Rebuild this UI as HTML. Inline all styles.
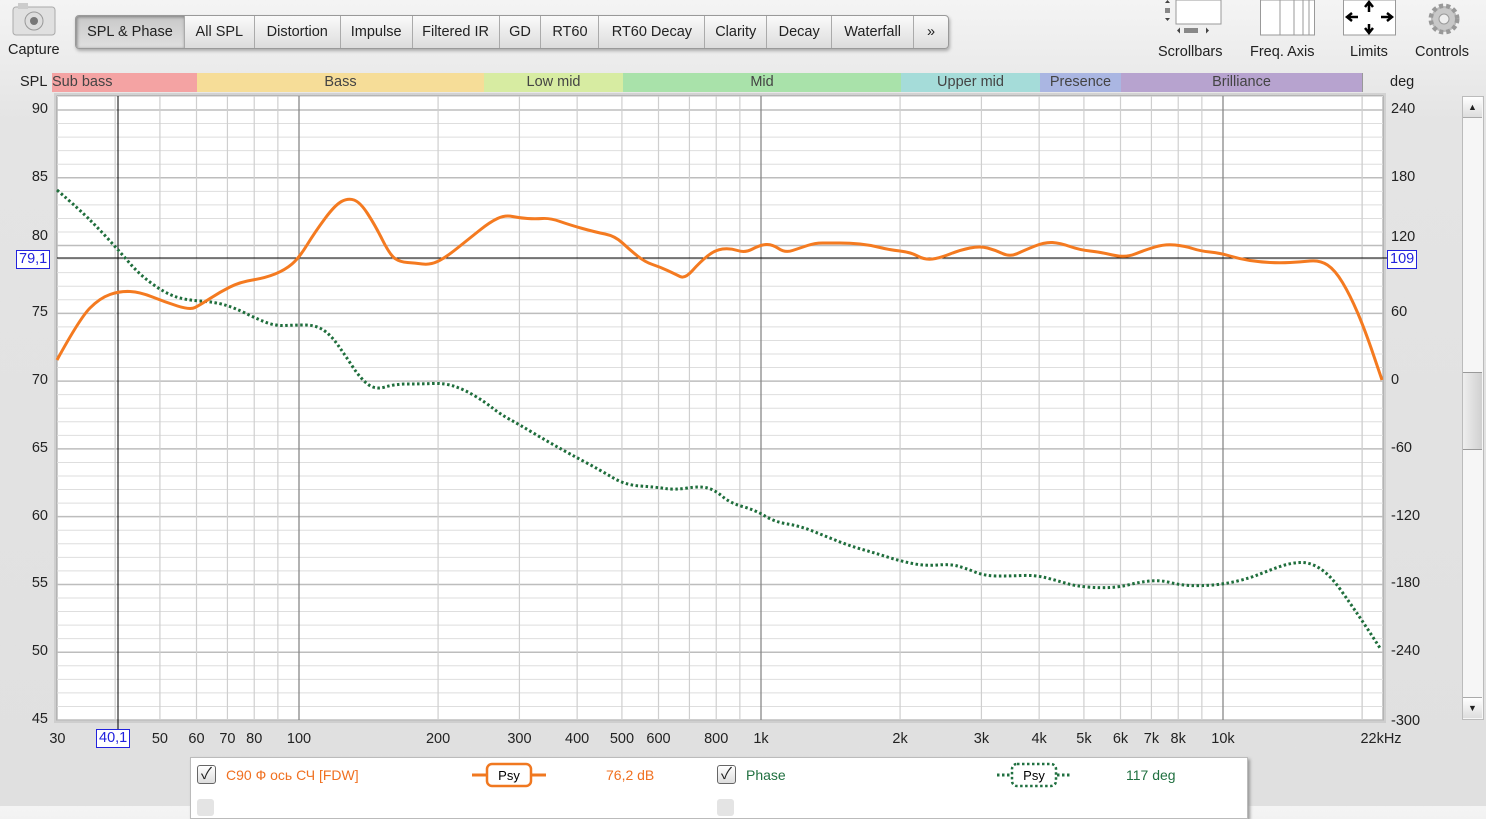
<!DOCTYPE html>
<html><head><meta charset="utf-8"><style>
body{margin:0;width:1486px;height:806px;overflow:hidden;background:linear-gradient(#f4f4f4,#e4e4e4 120px,#e0e0e0);font-family:"Liberation Sans","Noto Sans CJK SC",sans-serif;font-size:14px;color:#222;position:relative}
.a{position:absolute;white-space:nowrap}
.tabs{position:absolute;left:75px;top:15px;height:32px;width:872px;border:1px solid #999;border-radius:4px;background:linear-gradient(#fafafa,#dcdcdc);box-shadow:1px 2px 3px #aaa;display:flex;overflow:hidden}
.tabs div{border-right:1px solid #aaa;line-height:32px;text-align:center;font-size:14.5px}
.tabs .on{background:linear-gradient(#c8c8c8,#e0e0e0);box-shadow:inset 1px 1px 3px #777}
.tb{position:absolute;top:44px;font-size:14.5px}
.band{position:absolute;top:73px;height:19px;line-height:19px;text-align:center;color:#444;font-size:14.5px;border-right:1px solid #999;box-sizing:border-box;overflow:hidden}
.yl{position:absolute;font-size:14.5px;text-align:right;width:40px}
.yr{position:absolute;font-size:14.5px;left:1391px}
.xl{position:absolute;top:731px;font-size:14.5px;transform:translateX(-50%)}
.box{position:absolute;border:1px solid #2222dd;color:#2222dd;background:#fff;font-size:14.5px;padding:0 2px;line-height:17px}
.chk{position:absolute;width:17px;height:17px;border:1px solid #666;border-radius:3px;background:linear-gradient(#fff,#ddd);font-size:16px;line-height:17px;text-align:center}
</style></head><body>
<svg class="a" style="left:12px;top:2px" width="46" height="36"><rect x="1" y="5" width="42" height="28" rx="3" fill="#e0e0e0" stroke="#aaa"/><rect x="6" y="1" width="10" height="6" fill="#ccc"/><circle cx="22" cy="19" r="9" fill="#ddd" stroke="#999"/><circle cx="22" cy="19" r="4" fill="#777"/></svg>
<div class="a" style="left:8px;top:42px;font-size:14.5px">Capture</div>
<div class="tabs"><div class="on" style="width:108px">SPL &amp; Phase</div><div style="width:69px">All SPL</div><div style="width:85px">Distortion</div><div style="width:71px">Impulse</div><div style="width:86px">Filtered IR</div><div style="width:41px">GD</div><div style="width:57px">RT60</div><div style="width:105px">RT60 Decay</div><div style="width:61px">Clarity</div><div style="width:64px">Decay</div><div style="width:81px">Waterfall</div><div style="width:34px;border:0">»</div></div>
<svg class="a" style="left:1164px;top:0" width="60" height="36"><rect x="12" y="0" width="45" height="24" fill="#fff" stroke="#999"/><rect x="1" y="8" width="5" height="5" fill="#888"/><path d="M1 3l2.5-3 2.5 3zM1 18l2.5 3 2.5-3z" fill="#444"/><rect x="20" y="28" width="14" height="5" fill="#888"/><path d="M13 30.5l3-3v6zM45 30.5l-3-3v6z" fill="#444"/></svg>
<div class="tb" style="left:1158px">Scrollbars</div>
<svg class="a" style="left:1260px;top:0" width="56" height="36"><rect x="0.5" y="0" width="54" height="35" fill="#fff" stroke="#999"/><path d="M20 0v35M34 0v35M43 0v35M49 0v35" stroke="#999"/></svg>
<div class="tb" style="left:1250px">Freq. Axis</div>
<svg class="a" style="left:1343px;top:0" width="54" height="36"><rect x="0.5" y="0" width="52" height="35" fill="#fff" stroke="#999"/><path d="M26 3v9M22 7l4-5 4 5M26 24v9M22 28l4 5 4-5M5 17h10M9 13l-5 4 5 4M38 17h10M44 13l5 4-5 4" stroke="#000" stroke-width="2.5" fill="none"/></svg>
<div class="tb" style="left:1350px">Limits</div>
<svg class="a" style="left:1427px;top:2px" width="34" height="34"><circle cx="17" cy="17" r="13" fill="#bbb" stroke="#999" stroke-width="5" stroke-dasharray="4 3"/><circle cx="17" cy="17" r="11" fill="#c8c8c8"/><circle cx="17" cy="17" r="5" fill="#eee" stroke="#999"/></svg>
<div class="tb" style="left:1415px">Controls</div>

<div class="a" style="left:20px;top:74px;font-size:14.5px">SPL</div>
<div class="a" style="left:1390px;top:74px;font-size:14.5px">deg</div>
<div class="band" style="left:52px;width:146px;background:#f4a3a3;text-align:left">Sub bass</div>
<div class="band" style="left:197px;width:288px;background:#f6dd98">Bass</div>
<div class="band" style="left:484px;width:140px;background:#d7eca2">Low mid</div>
<div class="band" style="left:623px;width:279px;background:#a9e2aa">Mid</div>
<div class="band" style="left:901px;width:140px;background:#a5dcd9">Upper mid</div>
<div class="band" style="left:1040px;width:82px;background:#aab6e2">Presence</div>
<div class="band" style="left:1121px;width:242px;background:#b7a3cf">Brilliance</div>

<svg id="plot" class="a" style="left:0;top:0" width="1486" height="806"></svg>
<div id="labels"></div>

<div class="a" style="left:1462px;top:96px;width:20px;height:622px;background:#f6f6f6;border:1px solid #bbb"></div>
<div class="a" style="left:1463px;top:97px;width:19px;height:20px;background:linear-gradient(#fff,#ddd);border-bottom:1px solid #aaa;text-align:center;font-size:9px;line-height:20px">▲</div>
<div class="a" style="left:1463px;top:372px;width:19px;height:76px;background:linear-gradient(90deg,#eee,#d0d0d0);border-top:1px solid #999;border-bottom:1px solid #999"></div>
<div class="a" style="left:1463px;top:697px;width:19px;height:20px;background:linear-gradient(#fff,#ddd);border-top:1px solid #aaa;text-align:center;font-size:9px;line-height:20px">▼</div>

<div class="box" style="left:16px;top:250px">79,1</div>
<div class="box" style="left:1387px;top:250px">109</div>
<div class="box" style="left:96px;top:729px">40,1</div>

<div class="a" style="left:190px;top:757px;width:1056px;height:60px;background:#fff;border:1px solid #bbb;box-shadow:2px 2px 3px #999"></div>
<div class="chk" style="left:197px;top:765px">✓</div>
<div class="a" style="left:226px;top:767px;color:#f07020">C90 Ф ось СЧ [FDW]</div>
<svg class="a" style="left:470px;top:762px" width="80" height="26"><path d="M2 13h14M62 13h14" stroke="#f07820" stroke-width="3"/><rect x="17" y="2" width="44" height="22" rx="5" fill="#fff" stroke="#f07820" stroke-width="2.5"/><text x="39" y="18" font-size="13" text-anchor="middle" font-family="Liberation Sans">Psy</text></svg>
<div class="a" style="left:606px;top:767px;color:#f07020">76,2 dB</div>
<div class="chk" style="left:717px;top:765px">✓</div>
<div class="a" style="left:746px;top:767px;color:#207040">Phase</div>
<svg class="a" style="left:995px;top:762px" width="80" height="26"><path d="M2 13h14M62 13h14" stroke="#207040" stroke-width="3" stroke-dasharray="2.5 2.5"/><rect x="17" y="2" width="44" height="22" rx="5" fill="#fff" stroke="#207040" stroke-width="2.5" stroke-dasharray="2.5 2.5"/><text x="39" y="18" font-size="13" text-anchor="middle" font-family="Liberation Sans">Psy</text></svg>
<div class="a" style="left:1126px;top:767px;color:#207040">117 deg</div>
<div class="a" style="left:197px;top:799px;width:17px;height:17px;background:#e4e4e4;border-radius:3px"></div>
<div class="a" style="left:717px;top:799px;width:17px;height:17px;background:#e4e4e4;border-radius:3px"></div>

<script>
var L=57,R=1383,T=96,B=720;
function fx(f){return 299+462*Math.log10(f/100);}
function fy(d){return 110+(90-d)*(610/45);}
var s='<rect x="'+(L-3)+'" y="'+(T-3)+'" width="'+(R-L+6)+'" height="'+(B-T+6)+'" fill="#bbb" opacity=".5"/><rect x="'+L+'" y="'+T+'" width="'+(R-L)+'" height="'+(B-T)+'" fill="#fff" stroke="#999"/>';
for(var d=45;d<=91;d++){var y=fy(d);if(y<T)continue;s+='<line x1="'+L+'" x2="'+R+'" y1="'+y+'" y2="'+y+'" stroke="'+(d%5==0?'#bdbdbd':'#dedede')+'" stroke-width="'+(d%5==0?1.5:1)+'"/>';}
var fs=[];for(var dec=10;dec<=10000;dec*=10)for(var m=1;m<10;m++)fs.push(dec*m);fs.push(20000);
fs.forEach(function(f){if(f<=30||f>22000)return;var x=fx(f);var maj=(f==100||f==1000||f==10000);s+='<line x1="'+x+'" x2="'+x+'" y1="'+T+'" y2="'+B+'" stroke="'+(maj?'#888':'#cfcfcf')+'" stroke-width="'+(maj?1.3:1.2)+'"/>';});
s+='<line x1="'+L+'" x2="'+R+'" y1="258" y2="258" stroke="#000"/><line x1="118" x2="118" y1="'+T+'" y2="'+(B+10)+'" stroke="#000"/><line x1="'+(R-2)+'" x2="1388" y1="258" y2="258" stroke="#000"/>';
var o=[[57,360],[80,318],[100,298],[120,291],[140,292],[165,302],[190,310],[200,305],[220,292],[240,282],[265,278],[285,270],[299,258],[315,232],[335,205],[348,198],[360,202],[375,225],[390,255],[400,262],[415,263],[430,265],[445,258],[470,238],[490,222],[505,215],[520,218],[535,219],[550,218],[570,225],[595,232],[615,236],[630,250],[645,262],[660,267],[675,274],[685,279],[700,262],[715,250],[730,248],[745,253],[760,245],[772,244],[785,253],[800,248],[815,243],[830,243],[850,243],[870,245],[890,250],[910,252],[925,260],[940,258],[960,250],[980,246],[995,250],[1010,257],[1025,250],[1045,242],[1060,243],[1080,250],[1100,252],[1125,258],[1145,250],[1165,244],[1185,246],[1200,251],[1220,253],[1240,259],[1260,262],[1280,263],[1300,262],[1320,260],[1335,270],[1350,295],[1365,330],[1382,380]];
var g=[[57,190],[80,210],[100,230],[120,252],[140,275],[165,293],[185,300],[215,302],[235,308],[255,318],[275,326],[295,325],[315,325],[330,334],[345,355],[360,378],[375,390],[395,384],[420,384],[445,383],[465,390],[485,402],[500,414],[520,425],[545,440],[570,454],[600,470],[625,485],[655,487],[675,490],[700,486],[715,490],[730,503],[755,510],[775,522],[800,526],[825,536],[850,546],[875,553],[900,561],[925,566],[950,564],[965,568],[985,576],[1010,576],[1035,575],[1055,580],[1075,586],[1100,588],[1120,587],[1140,582],[1160,580],[1180,585],[1200,586],[1225,584],[1250,578],[1270,570],[1290,563],[1310,562],[1330,575],[1350,603],[1365,625],[1380,648]];
function path(p){var d='M'+p[0];for(var i=1;i<p.length-1;i++){var mx=(p[i][0]+p[i+1][0])/2,my=(p[i][1]+p[i+1][1])/2;d+=' Q'+p[i]+' '+mx+','+my;}return d+' L'+p[p.length-1];}
s+='<path d="'+path(g)+'" fill="none" stroke="#1f6e3c" stroke-width="3" stroke-dasharray="2.5 2.5"/>';
s+='<path d="'+path(o)+'" fill="none" stroke="#f47a20" stroke-width="3"/>';
document.getElementById('plot').innerHTML=s;
var h='';
[90,85,80,75,70,65,60,55,50,45].forEach(function(d){var y=fy(d);if(d==80)return;h+='<div class="yl" style="left:8px;top:'+(y-9)+'px">'+d+'</div>';});
h+='<div class="yl" style="left:8px;top:'+(fy(80)-18)+'px">80</div>';
[240,180,120,60,0,-60,-120,-180,-240,-300].forEach(function(v,i){var y=110+i*(610/9);if(v==120)y-=8;if(v==-300)y+=2;h+='<div class="yr" style="top:'+(y-9)+'px">'+v+'</div>';});
[[30,'30'],[50,'50'],[60,'60'],[70,'70'],[80,'80'],[100,'100'],[200,'200'],[300,'300'],[400,'400'],[500,'500'],[600,'600'],[800,'800'],[1000,'1k'],[2000,'2k'],[3000,'3k'],[4000,'4k'],[5000,'5k'],[6000,'6k'],[7000,'7k'],[8000,'8k'],[10000,'10k']].forEach(function(a){h+='<div class="xl" style="left:'+fx(a[0])+'px">'+a[1]+'</div>';});
h+='<div class="xl" style="left:1381px">22kHz</div>';
document.getElementById('labels').innerHTML=h;
</script>
</body></html>
